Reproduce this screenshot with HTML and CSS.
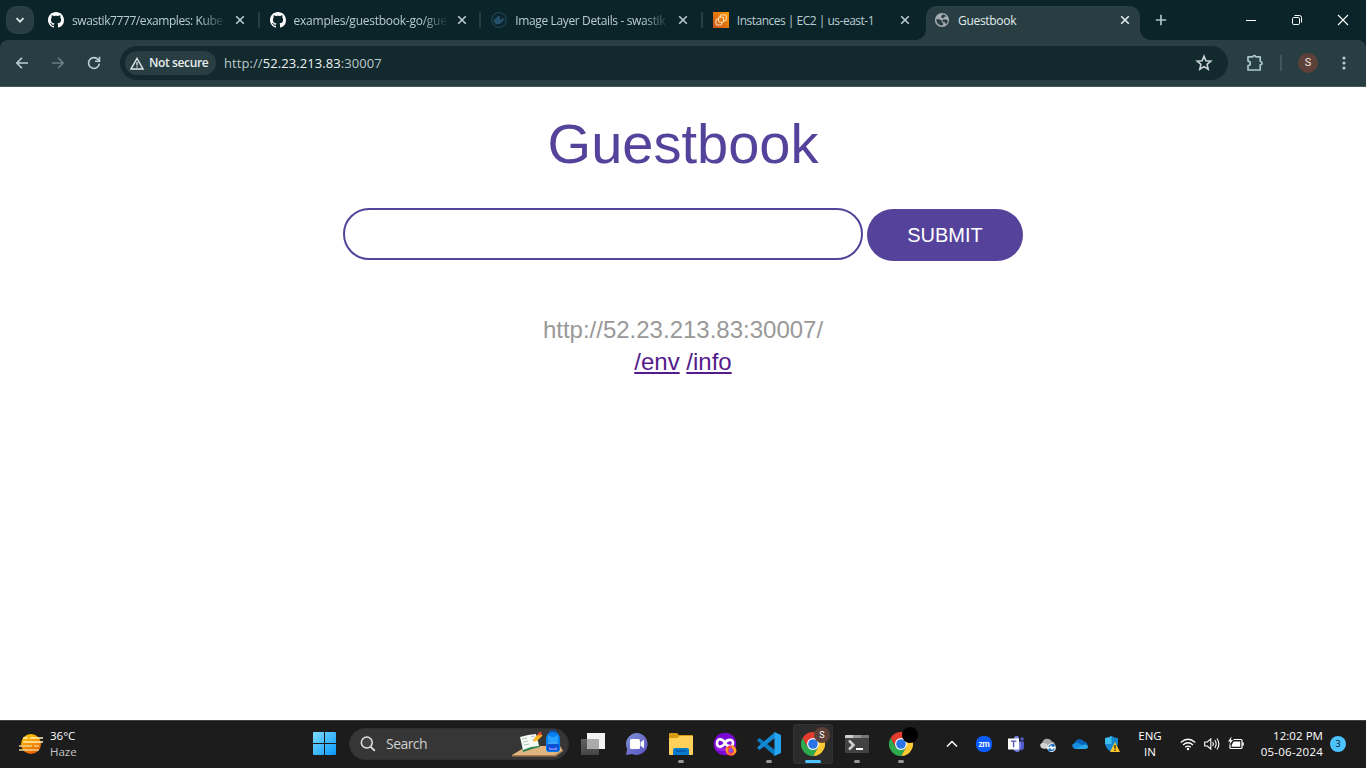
FILE: index.html
```html
<!DOCTYPE html>
<html lang="en">
<head>
<meta charset="utf-8">
<title>Guestbook</title>
<link rel="stylesheet" href="styles.css">
</head>
<body>
<svg class="defs" width="0" height="0" aria-hidden="true">
  <defs>
    <symbol id="x" viewBox="0 0 10 10"><path d="M1.2 1.2l7.600 7.600M8.800 1.200L1.200 8.800" fill="none" stroke="currentColor" stroke-width="1.600"/></symbol>
    <symbol id="github" viewBox="0 0 16 16"><path fill="#fff" d="M8 0C3.58 0 0 3.58 0 8c0 3.54 2.29 6.53 5.47 7.59.4.07.55-.17.55-.38 0-.19-.01-.82-.01-1.49-2.01.37-2.53-.49-2.69-.94-.09-.23-.48-.94-.82-1.13-.28-.15-.68-.52-.01-.53.63-.01 1.08.58 1.23.82.72 1.21 1.87.87 2.33.66.07-.52.28-.87.51-1.07-1.78-.2-3.64-.89-3.64-3.95 0-.87.31-1.59.82-2.15-.08-.2-.36-1.02.08-2.12 0 0 .67-.21 2.2.82.64-.18 1.32-.27 2-.27s1.36.09 2 .27c1.53-1.04 2.2-.82 2.2-.82.44 1.1.16 1.92.08 2.12.51.56.82 1.27.82 2.15 0 3.07-1.87 3.75-3.65 3.95.29.25.54.73.54 1.48 0 1.07-.01 1.93-.01 2.2 0 .21.15.46.55.38A8.01 8.01 0 0 0 16 8c0-4.42-3.58-8-8-8z"/></symbol>
    <symbol id="chrome" viewBox="0 0 24 24">
      <path d="M12 6h10.400A12 12 0 0 1 12 24l5.200-9z" fill="#fcc934"/>
      <path d="M17.200 15L12 24A12 12 0 0 1 1.600 6l5.200 9z" fill="#2da94f"/>
      <path d="M1.600 6A12 12 0 0 1 22.400 6H12L6.800 15z" fill="#e33b2e"/>
      <circle cx="12" cy="12" r="6" fill="#fff"/><circle cx="12" cy="12" r="4.800" fill="#2a74e8"/>
    </symbol>
  </defs>
</svg>

<header class="tabstrip">
  <button class="tab-search"><svg width="10" height="10" viewBox="0 0 10 10"><path d="M1.500 3.200L5 6.700l3.500-3.500" fill="none" stroke="#dbe7e9" stroke-width="1.800"/></svg></button>
  <nav class="tabs">
    <div class="tab">
      <svg class="favicon"><use href="#github"/></svg><span class="tab-title fade t1">swastik7777/examples: Kube</span><svg class="close"><use href="#x"/></svg>
    </div>
    <div class="tab">
      <svg class="favicon"><use href="#github"/></svg><span class="tab-title fade t2">examples/guestbook-go/gue</span><svg class="close"><use href="#x"/></svg>
    </div>
    <div class="tab">
      <svg class="favicon" viewBox="0 0 16 16"><circle cx="8" cy="8" r="7.300" fill="none" stroke="#1d4054" stroke-width="1.300"/><path d="M2.500 7.300h2V5.500h2V4h2.300v3.300h1.700c.8-.3.700-1.200 1.200-1.800.6.500.7 1 .7 1.400.7 0 1.200 0 1.600.400-.5.800-1.100 1-1.900 1C11 11 9.300 12.300 6.800 12.300 4.200 12.300 2.600 10.800 2.500 7.300z" fill="#25506a"/></svg><span class="tab-title fade t3">Image Layer Details - swastik</span><svg class="close"><use href="#x"/></svg>
    </div>
    <div class="tab">
      <svg class="favicon" viewBox="0 0 16 16"><defs><linearGradient id="ec2" x1="0" y1="1" x2="1" y2="0"><stop stop-color="#c8511b"/><stop offset="1" stop-color="#f90"/></linearGradient></defs><path fill="url(#ec2)" d="M0 0h16v16H0z"/><g fill="none" stroke="#fff0d8" stroke-width=".9"><rect x="5.600" y="5.200" width="5" height="5" rx=".5"/><path d="M7.300 5.200V3.400q0-.5.500-.5h5q.5 0 .5.500v4.700q0 .5-.5.500h-2.200M5.600 7.300H3.500q-.5 0-.5.500v4.700q0 .5.500.5h4.800q.5 0 .5-.5v-2.300"/></g></svg><span class="tab-title t4">Instances | EC2 | us-east-1</span><svg class="close"><use href="#x"/></svg>
    </div>
    <div class="tab active">
      <svg class="favicon" viewBox="0 0 16 16"><circle cx="8" cy="8" r="7.100" fill="#a5abb0"/><path d="M2.300 7.300h3.200l2.200 1.400v1.500l1.400.8v2.300C5.200 14 2.100 11 2.300 7.300zM8.300 2.400c1.800 0 3.300.8 4.300 2.200H10.800L9.700 6H8L7 5.200zM9 7.600h3l1.900 1c-.2 1.600-.9 2.900-2 3.900L11 10.300H9.700L8.200 8.700z" fill="#283e43"/></svg><span class="tab-title t5">Guestbook</span><svg class="close"><use href="#x"/></svg>
    </div>
  </nav>
  <button class="new-tab"><svg width="12" height="12" viewBox="0 0 12 12"><path d="M6 .8v10.400M.8 6h10.400" stroke="#a8c3c8" stroke-width="1.700"/></svg></button>
  <div class="window-controls">
    <svg viewBox="0 0 12 12"><path d="M1 6.500h10" stroke="#fff"/></svg>
    <svg viewBox="0 0 12 12"><rect x="1.500" y="3.500" width="7" height="7" rx="1.200" fill="none" stroke="#fff"/><path d="M3.500 1.500h5q2 0 2 2v5" fill="none" stroke="#fff"/></svg>
    <svg viewBox="0 0 12 12"><path d="M1 1l10 10M11 1L1 11" stroke="#fff" stroke-width="1.100"/></svg>
  </div>
</header>

<div class="toolbar-back"><div class="toolbar">
  <div class="nav">
    <svg viewBox="0 0 16 16"><path d="M14 8H3M8 2.800L2.800 8 8 13.200" fill="none" stroke="currentColor" stroke-width="1.600"/></svg>
    <svg class="disabled" viewBox="0 0 16 16"><path d="M2 8h11M8 2.800L13.200 8 8 13.200" fill="none" stroke="currentColor" stroke-width="1.600"/></svg>
    <svg viewBox="0 0 16 16"><path d="M13.300 8.600A5.400 5.400 0 1 1 12 4.500l1 1.200M13.500 1.800v4.500H9" fill="none" stroke="currentColor" stroke-width="1.600"/></svg>
  </div>
  <div class="omnibox">
    <div class="chip"><svg width="15" height="13" viewBox="0 0 15 13"><path d="M7 1.500l6 10.500H1z" fill="none" stroke="#dfe7e8" stroke-width="1.500"/><path d="M7 5v3.500M7 9.200v1.400" stroke="#dfe7e8" stroke-width="1.300"/></svg><span>Not secure</span></div>
    <span class="url">http://<b>52.23.213.83</b>:30007</span>
    <svg class="star" viewBox="0 0 18 18"><path d="M9 2.200l1.900 4.600 4.900.4-3.700 3.200 1.100 4.800L9 12.600l-4.200 2.600 1.100-4.800-3.700-3.200 4.900-.4z" fill="none" stroke="#c8d3d5" stroke-width="1.600"/></svg>
  </div>
  <svg class="ext" viewBox="0 0 18 18"><path d="M2 2.800h4.800q.2-1.200 1.500-1.200t1.500 1.200H14.200v4.700q1.900.2 1.900 1.700t-1.900 1.700V16H2v-4.300q2.300-.2 2.300-2.300T2 7.100z" fill="none" stroke="#a8c7cd" stroke-width="1.700" stroke-linejoin="round"/></svg>
  <i class="divider"></i>
  <span class="avatar">S</span>
  <svg class="kebab" viewBox="0 0 4 16"><g fill="#b5cace"><circle cx="2" cy="3" r="1.600"/><circle cx="2" cy="8" r="1.600"/><circle cx="2" cy="13" r="1.600"/></g></svg>
</div></div>

<main class="page">
  <h1>Guestbook</h1>
  <form class="entry"><input type="text" aria-label="Entry"><button type="button">SUBMIT</button></form>
  <div class="host">http://52.23.213.83:30007/</div>
  <div class="links"><a href="#env">/env</a> <a href="#info">/info</a></div>
</main>

<footer class="taskbar">
  <div class="weather">
    <svg width="24" height="22" viewBox="0 0 24 22"><defs><linearGradient id="sun" x2=".4" y2="1"><stop stop-color="#ffd000"/><stop offset="1" stop-color="#ee6500"/></linearGradient></defs><circle cx="12" cy="11" r="10" fill="url(#sun)"/><g stroke="#fff0b6" stroke-width="1.700"><path d="M4 5h5M11 5h13M4 9h20"/><path d="M0 13h13M15 13h5M0 17h20" stroke="#ead38f"/></g></svg>
    <div class="weather-text"><span class="temp">36°C</span><span class="cond">Haze</span></div>
  </div>
  <div class="start"><svg width="23" height="23" viewBox="0 0 23 23"><defs><linearGradient id="win" x2="1" y2="1" gradientUnits="objectBoundingBox"><stop stop-color="#7ddcff"/><stop offset="1" stop-color="#0897fa"/></linearGradient></defs><path d="M1 0h10v11H0V1q0-1 1-1zM12 0h10q1 0 1 1v10H12zM0 12h11v11H1q-1 0-1-1zM12 12h11v10q0 1-1 1H12z" fill="url(#win)"/></svg></div>
  <div class="search">
    <svg width="16" height="16" viewBox="0 0 16 16"><circle cx="6.800" cy="6.600" r="5.500" fill="#444" stroke="#e4e4e4" stroke-width="1.500"/><path d="M10.800 10.800l4 4" stroke="#e4e4e4" stroke-width="1.800"/></svg>
    <span>Search</span>
    <svg class="school" width="52" height="28" viewBox="0 0 52 28"><path d="M0 25L15 16h33l3 5-8 5z" fill="#dfb47f"/><path d="M0 25h43l8-5v1l-7 5.500H0z" fill="#a97c50"/><path d="M9 9l9-3 7 1 3 10-8 2-9 3z" fill="#288251"/><path d="M8 7l8-2 3 12-8 3zM16 5l8-1 3 12-8 1z" fill="#f5faf4"/><path d="M10 9l5-1M11 12l5-1M12 15l5-1M19 7l4-1M20 10l4-1" stroke="#92aaa0" stroke-width=".7"/><path d="M21 12l1.500-4 5-5 3 2.500-5 5z" fill="#ffb51f"/><path d="M26 4l2-2.500L30 3l-2.500 3z" fill="#e9422d"/><path d="M38 3q0-2.500 3-2.500t3 2.500" fill="none" stroke="#0756c0" stroke-width="1.500"/><path d="M34 10q0-8 7-8t7 8v9q0 3-3 3h-8q-3 0-3-3z" fill="#087ff0"/><path d="M36 5q4 4 10 0v6q-5 3-10 0z" fill="#27a3ff"/><path d="M35 14h12v5q0 2-2 2h-8q-2 0-2-2z" fill="#0851d4"/><path d="M37 17q4 3 8 0v3h-8z" fill="#7c87ff"/><path d="M36 13h10" stroke="#6fc8ff"/></svg>
  </div>
  <div class="apps">
    <div class="app"><svg viewBox="0 0 24 24"><defs><linearGradient id="tv" x2="0" y2="1"><stop stop-color="#606060"/><stop offset="1" stop-color="#454545"/></linearGradient></defs><path fill="url(#tv)" d="M0 7h18v16H0z"/><path fill="#f2f2f2" d="M6 1h18v16H6z"/><path fill="#aaa" d="M6 7h12v10H6z"/></svg></div>
    <div class="app"><svg viewBox="0 0 24 24"><defs><linearGradient id="chat" x2="1" y2="1"><stop stop-color="#7995df"/><stop offset=".45" stop-color="#7175cb"/><stop offset="1" stop-color="#5551c5"/></linearGradient></defs><path d="M12 1A11 11 0 1 1 7 22l-6 1 1.200-6A11 11 0 0 1 12 1z" fill="url(#chat)"/><rect x="5" y="7" width="10" height="10" rx="1.500" fill="#fff"/><path d="M15.500 10.500L19 7.500v9l-3.500-3z" fill="#fff"/></svg></div>
    <div class="app running"><svg viewBox="0 0 24 24"><path d="M0 2q0-1 1-1h7l2 2h13q1 0 1 1v5H0z" fill="#d69a12"/><path d="M0 6h8.500l2-2H24v18q0 1-1 1H1q-1 0-1-1z" fill="#ffd15b"/><path d="M4 23v-5q0-2 2-2h12q2 0 2 2v5z" fill="#087acb"/><path d="M7 19h10" stroke="#0659a2" stroke-width="1.500"/></svg></div>
    <div class="app"><svg viewBox="0 0 24 24"><circle cx="12" cy="12" r="11.300" fill="#7a08d5"/><path d="M1 11q6 9 20 1v4q-8 5-17 2z" fill="#9c22e3"/><path d="M12 11C10 7 4 5.500 4 11s6 4 8 0 8-4.500 8 0-6 4-8 0z" fill="none" stroke="#fff" stroke-width="2.700"/><circle cx="18" cy="18.500" r="5.300" fill="#ff3654"/><path d="M19 13q4 2 4.500 6-2 5-7 4 6-2 4-5t-2-2z" fill="#ffa51f"/><circle cx="18" cy="18.500" r="2.200" fill="#8a4ce4"/><path d="M13 15l3 1-1 2q-1 3 3 4-5 1-5.500-4z" fill="#ff931b"/></svg></div>
    <div class="app running"><svg viewBox="0 0 24 24"><path d="M0 8l2.500-2L18 18v6L1 9.500z" fill="#087bc0"/><path d="M0 16l2.500 2L18 6V0L1 14.500z" fill="#1389d1"/><path d="M17.500 0L24 3v18l-6.500 3z" fill="#27a4ef"/></svg></div>
    <div class="app running focused"><svg viewBox="0 0 24 24"><use href="#chrome"/></svg><span class="profile">S</span></div>
    <div class="app running"><svg viewBox="0 0 24 24"><path d="M0 4q0-1 1-1h22q1 0 1 1v16q0 1-1 1H1q-1 0-1-1z" fill="#424242"/><path d="M0 4q0-1 1-1h7v3H0z" fill="#d1d1d1"/><path d="M8 3h8v3H8z" fill="#999"/><path d="M16 3h7q1 0 1 1v2h-8z" fill="#777"/><path d="M4 8.500l4.500 4.500L4 17.500" fill="none" stroke="#cfcfcf" stroke-width="2.500"/><path d="M11 17h7" stroke="#fff" stroke-width="2"/></svg></div>
    <div class="app running"><svg viewBox="0 0 24 24"><use href="#chrome"/></svg><span class="profile black"></span></div>
  </div>
  <div class="tray">
    <div><svg viewBox="0 0 16 16"><path d="M3 10.500l5-5 5 5" fill="none" stroke="#fff" stroke-width="1.500"/></svg></div>
    <div><span class="zoom-app">zm</span></div>
    <div><svg viewBox="0 0 16 16"><circle cx="8.500" cy="2.500" r="2.500" fill="#7f86eb"/><circle cx="14" cy="3" r="1.800" fill="#5059c9"/><path d="M7 5.500h6V12q-1 4-4 4-4-1-4-5z" fill="#7b83eb"/><path d="M13 5.500h3V11q0 3-3 3.500z" fill="#5059c9"/><path d="M0 2.500h11v11H0z" fill="#fff"/><path d="M2.800 5.200h5.600M5.600 5.200v6" stroke="#4d51b6" stroke-width="1.300"/></svg></div>
    <div><svg viewBox="0 0 16 16"><path d="M3 12.500a3.300 3.300 0 0 1-.7-6A5.300 5.300 0 0 1 12 5.500a4 4 0 0 1 2 7z" fill="#aaa"/><path d="M.5 8q4.500-2.500 7.500 1.500l4-2 3 2-1 3H3Q-.5 11.500.5 8z" fill="#d3d3d3"/><circle cx="11.500" cy="11.700" r="4.300" fill="#fff"/><path d="M8.800 11q1-2.300 3-2.300 1.300 0 2 1M14 7.700v2.500h-2.500M14.300 12.400q-1 2.300-3 2.300-1.300 0-2-1M9 15.700v-2.500h2.500" fill="none" stroke="#1369b6" stroke-width="1.200"/></svg></div>
    <div><svg viewBox="0 0 16 16"><path d="M3 13a3.500 3.500 0 0 1-.5-6A5.300 5.300 0 0 1 12 5.500 4 4 0 0 1 13.500 13z" fill="#0864b8"/><path d="M.5 8.500q3.500-3 7-1l3 2-7 3.500H3Q-.5 11.500.5 8.500z" fill="#1490df"/><path d="M3 13l9-4.500q3.500-.5 4 2 0 2.500-3 2.500z" fill="#28a8ea"/></svg></div>
    <div><svg viewBox="0 0 16 16"><path d="M7.500 0q3 2 6.500 2v6q-1 5-6.500 8Q2 13 1 8V2q3.500 0 6.500-2z" fill="#1688d0"/><path d="M7.500 0v8H1V2q3.500 0 6.500-2z" fill="#3bbef0"/><path d="M11 6l5 10H6z" fill="#ffc629"/><path d="M11 9v3.500M11 13.500v1.400" stroke="#271e05" stroke-width="1.300"/></svg></div>
  </div>
  <div class="language"><span>ENG</span><span>IN</span></div>
  <div class="status">
    <svg viewBox="0 0 16 16"><path d="M.8 6.500q7.200-6.500 14.400 0M3 9q5-4.500 10 0M5.200 11.300q2.800-2.500 5.600 0" fill="none" stroke="#fff" stroke-width="1.200"/><circle cx="8" cy="13" r="1.200" fill="#fff"/></svg>
    <svg viewBox="0 0 16 16"><path d="M.7 6h2.600l3.500-3v10l-3.500-3H.7z" fill="none" stroke="#fff" stroke-width="1.100"/><path d="M8.700 6q1.200 2 0 4M10.800 4q2.700 4 0 8M12.900 2.500q4 5.500 0 11" fill="none" stroke="#fff" stroke-width="1.100"/></svg>
    <svg viewBox="0 0 16 16"><path d="M5.500 3.500H13q1 0 1 1v7q0 1-1 1H3q-1 0-1-1V8.500" fill="none" stroke="#fff" stroke-width="1.200"/><path d="M5.500 5.500H12.200v5.200H3.700V9zM14.300 6.500h1.500v3h-1.500z" fill="#fff"/><path d="M3.500.5L0 5.500h2.200L1.200 9 5 4H3z" fill="#fff"/></svg>
  </div>
  <div class="clock"><span class="time">12:02 PM</span><span class="date">05-06-2024</span></div>
  <span class="notifications">3</span>
</footer>
</body>
</html>
```
FILE: styles.css
```css
* { box-sizing: border-box; }
body {
  margin: 0;
  width: 1366px;
  height: 768px;
  overflow: hidden;
  display: flex;
  flex-direction: column;
  background: #fff;
  font: 12px/16px "Open Sans", "Noto Sans", sans-serif;
}
svg { display: block; flex: none; }
button { border: 0; padding: 0; }
.defs { position: absolute; }

/* Tab strip */
.tabstrip { height: 40px; flex: none; background: #0b2429; display: flex; padding-left: 6px; }
.tab-search { width: 28px; height: 28px; margin: 6px 4px 0 0; border-radius: 10px; background: #283e43; display: flex; align-items: center; justify-content: center; }
.tabs { display: flex; width: 1102px; }
.tab { position: relative; width: 221.600px; flex: none; padding-left: 10px; display: flex; align-items: center; color: #b9cdd1; }
.tab:not(.active)::after { content: ""; position: absolute; right: 0; top: 12px; width: 2px; height: 16px; background: #283e43; }
.tab:nth-child(4)::after { display: none; }
.favicon { width: 16px; height: 16px; margin-right: 8px; }
.tab-title { width: 153px; padding-top: 2px; white-space: nowrap; margin-right: 10px; letter-spacing: -.2px; }
.fade { -webkit-mask-image: linear-gradient(90deg, #000 128px, transparent 154px); mask-image: linear-gradient(90deg, #000 128px, transparent 154px); }
.t1 { letter-spacing: -.42px; }
.t2 { letter-spacing: -.25px; }
.t3 { letter-spacing: -.36px; }
.t4 { letter-spacing: -.5px; }
.t5 { letter-spacing: -.3px; }
.close { width: 10px; height: 10px; }
.tab.active { width: 214px; height: 34px; margin: 6px 0 0 1.600px; padding: 0 0 6px 8px; background: #283e43; border-radius: 10px 10px 0 0; color: #e3eced; }
.tab.active .tab-title { margin-right: 9px; }
.tab.active::before, .tab.active::after {
  content: ""; position: absolute; bottom: 0; top: auto; width: 10px; height: 10px;
}
.tab.active::before { left: -10px; background: radial-gradient(circle at 0 0, transparent 9.500px, #283e43 10px); }
.tab.active::after { right: -10px; background: radial-gradient(circle at 100% 0, transparent 9.500px, #283e43 10px); }
.new-tab { width: 42px; height: 40px; background: none; display: flex; align-items: center; justify-content: center; }
.window-controls { margin-left: auto; display: flex; align-items: center; }
.window-controls svg { width: 12px; height: 12px; margin: 0 17px; }

/* Toolbar */
.toolbar-back { height: 47px; flex: none; background: #0b2429; }
.toolbar { height: 47px; background: #283e43; border-bottom: 1px solid #43575b; border-radius: 8px 8px 0 0; display: flex; align-items: center; padding-left: 14px; }
.nav { display: flex; gap: 20px; width: 106px; color: #bdd0d4; }
.nav svg { width: 16px; height: 16px; }
.nav .disabled { color: #6a7e83; }
.omnibox { width: 1108px; height: 34px; border-radius: 17px; background: #12292e; display: flex; align-items: center; padding: 0 15px 0 5px; }
.chip { width: 91px; height: 24px; border-radius: 12px; background: #283e43; display: flex; align-items: center; gap: 4px; padding-left: 5px; color: #e8efef; font-weight: 600; letter-spacing: -.38px; white-space: nowrap; }
.url { margin-left: 8px; color: #bcc9cb; font-size: 13px; letter-spacing: .08px; }
.url b { font-weight: 400; color: #eef3f3; }
.star { width: 18px; height: 18px; margin-left: auto; }
.ext { width: 18px; height: 18px; margin-left: 18px; }
.divider { width: 2px; height: 16px; margin: 0 16px; background: #40565c; }
.avatar { width: 20px; height: 20px; border-radius: 50%; background: #5d4037; color: #f0e6e2; font: 11px/20px Roboto, sans-serif; text-align: center; }
.kebab { width: 4px; height: 16px; margin-left: 24px; }

/* Guestbook page */
.page { height: 633px; flex: none; display: flex; flex-direction: column; align-items: center; font-family: "Liberation Sans", Arial, sans-serif; }
.page h1 { margin: 24px 0 0; font-size: 56px; line-height: 66px; font-weight: 400; color: #55439b; }
.entry { display: flex; gap: 4px; margin-top: 31px; }
.entry input { width: 520px; height: 52px; border: 2px solid #55439b; border-radius: 26px; background: #fff; outline: 0; padding: 0 20px; }
.entry button { width: 156px; height: 52px; margin-top: 1px; border-radius: 26px; background: #55439b; color: #fff; font: 20px "Liberation Sans", Arial, sans-serif; }
.host { margin-top: 53px; font-size: 24px; line-height: 32px; color: #999; }
.links { font-size: 24px; line-height: 32px; color: #551a8b; }
.links a { color: #551a8b; }

/* Taskbar */
.taskbar { height: 48px; flex: none; padding-bottom: 2px; background: #1c1c1c; border-top: 1px solid #414141; color: #fff; display: flex; align-items: center; }
.weather { width: 305px; padding-left: 19px; display: flex; align-items: center; gap: 7px; }
.weather-text, .language, .clock { display: flex; flex-direction: column; }
.weather-text { font-size: 11.500px; }
.temp { letter-spacing: 0; }
.cond { color: #c5c5c5; }
.start { width: 44px; padding-left: 8px; }
.search { width: 220px; height: 32px; border-radius: 16px; background: #363636; border: 1px solid #303030; display: flex; align-items: center; padding-left: 10px; }
.search span { margin-left: 10px; font-size: 14px; letter-spacing: -.55px; color: #cfcfcf; }
.school { margin-left: auto; margin-right: 4px; }
.apps { display: flex; gap: 4px; margin-left: 4px; }
.app { position: relative; width: 40px; height: 40px; border-radius: 4px; display: flex; align-items: center; justify-content: center; }
.app > svg { width: 24px; height: 24px; }
.running::after { content: ""; position: absolute; left: 17px; bottom: 1px; width: 6px; height: 3px; border-radius: 2px; background: #999; }
.focused { background: #2b2b2b; box-shadow: inset 0 0 0 1px #323232; }
.running.focused::after { left: 12px; width: 16px; background: #4cc2ff; }
.profile { position: absolute; left: 21px; top: 3px; width: 16px; height: 16px; border-radius: 50%; background: #5d4037; color: #fff; font: 9px/16px Roboto, sans-serif; text-align: center; }
.profile.black { background: #000; }
.tray { display: flex; margin-left: 15px; }
.tray > div { width: 32px; height: 32px; display: flex; align-items: center; justify-content: center; }
.tray svg { width: 16px; height: 16px; }
.zoom-app { width: 16px; height: 16px; border-radius: 7px; background: #0b5cff; font: 700 9px/15px Lato, sans-serif; text-align: center; letter-spacing: -.4px; }
.language { width: 44px; align-items: center; font-size: 11.500px; }
.status { display: flex; gap: 8px; margin-left: 8px; }
.status svg { width: 16px; height: 16px; }
.clock { width: 79px; align-items: flex-end; font-size: 11.500px; white-space: nowrap; }
.time { letter-spacing: .05px; }
.date { letter-spacing: .22px; }
.notifications { width: 16px; height: 16px; margin-left: 7px; border-radius: 50%; background: #4cc2ff; color: #111; font-size: 9px; text-align: center; line-height: 16px; }
```
